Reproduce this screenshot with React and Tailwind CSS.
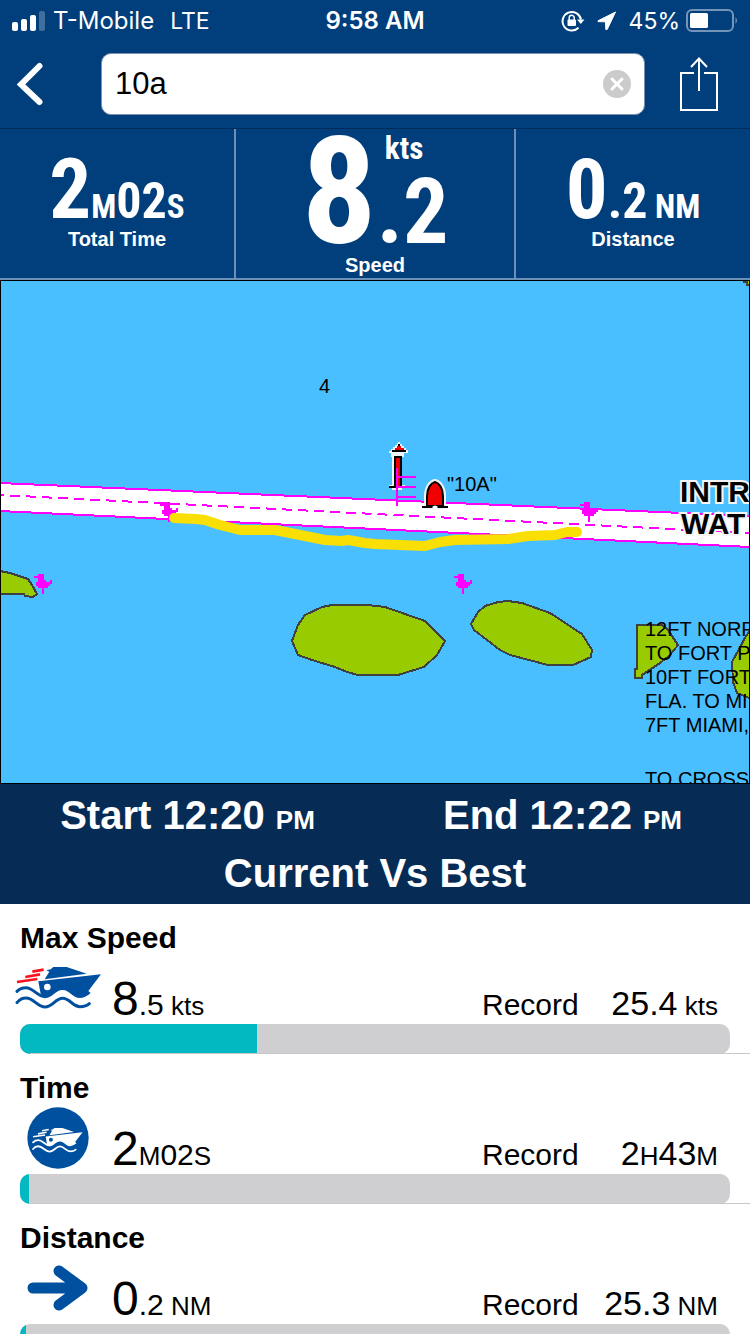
import { useState } from "react";

const records = [
  { title: "Max Speed", icon: "speed", value: [["8", "lg"], [".5", "md"], [" kts", "sm"]], best: [["25.4", "best"], [" kts", "sm"]], percent: 33.4 },
  { title: "Time", icon: "time", value: [["2", "lg"], ["M", "sm"], ["02", "md"], ["S", "sm"]], best: [["2", "best"], ["H", "sm"], ["43", "best"], ["M", "sm"]], percent: 1.3 },
  { title: "Distance", icon: "distance", value: [["0", "lg"], [".2", "md"], [" NM", "sm"]], best: [["25.3", "best"], [" NM", "sm"]], percent: 0.8 },
];

const sizes = {
  lg: "text-[48px]",
  md: "text-[30px]",
  best: "text-[34px]",
  sm: "text-[26px]",
};

const StatusBar = () => (
  <div className="grid h-10 grid-cols-[1fr_auto_1fr] items-center px-3 pt-0.5 font-['Inter',sans-serif] text-[24px] leading-none">
    <div className="flex items-center gap-2">
      <svg className="h-5 w-[33px]" viewBox="0 0 33 20" fill="white" aria-hidden="true">
        <rect x="0" y="11" width="6" height="9" rx="2" />
        <rect x="9" y="8" width="6" height="12" rx="2" />
        <rect x="18" y="4" width="6" height="16" rx="2" />
        <rect x="27" y="0" width="6" height="20" rx="2" opacity="0.25" />
      </svg>
      <span>T-Mobile</span>
      <span className="ml-2 text-[23px]">LTE</span>
    </div>
    <span className="font-semibold">9:58 AM</span>
    <div className="flex items-center justify-end">
      {/* Orientation lock */}
      <svg className="mr-3 h-[22px] w-6" viewBox="0 0 24 22" aria-hidden="true">
        <path d="M17.5 17.8A9.3 9.3 0 1 1 20 9.5" fill="none" stroke="white" strokeWidth="2" />
        <path d="M16 9.5h7.5l-3.7 4.4z" fill="white" />
        <rect x="6.5" y="9.5" width="8.5" height="6.5" rx="1" fill="white" />
        <path d="M8.2 10V7.8a2.5 2.5 0 0 1 5 0V10" fill="none" stroke="white" strokeWidth="1.5" />
      </svg>
      {/* Location */}
      <svg className="mr-3 h-5 w-5" viewBox="0 0 20 20" fill="white" stroke="white" strokeLinejoin="round" aria-hidden="true">
        <path d="M18.500 1 1 9.800V10.600L8.500 10.800 8.800 18.500H10.200z" />
      </svg>
      <span className="text-[23px]">45%</span>
      <svg className="ml-1.5 h-6 w-[52px]" viewBox="0 0 52 24" aria-hidden="true">
        <rect x="1" y="1" width="46" height="21" rx="5" fill="none" stroke="white" strokeOpacity="0.45" strokeWidth="2" />
        <rect x="4" y="4" width="18" height="15" rx="1.5" fill="white" />
        <path d="M49.500 8q3 3.500 0 7z" fill="white" opacity="0.45" />
      </svg>
    </div>
  </div>
);

const SearchHeader = () => {
  const [name, setName] = useState("10a");

  return (
    <header className="flex h-[88px] items-center pr-8 pl-4">
      <button type="button" aria-label="Back" className="mr-[58px]">
        <svg className="h-11 w-[27px]" viewBox="0 0 27 44" fill="none" stroke="white" strokeWidth="6" strokeLinecap="round">
          <path d="M23.500 4 5 22.500 23.500 40" />
        </svg>
      </button>
      <div className="flex h-[62px] min-w-0 flex-1 items-center rounded-[10px] border border-[#7d92aa] bg-white px-[13px]">
        <input
          type="text"
          aria-label="Trip name"
          value={name}
          onChange={(e) => setName(e.target.value)}
          className="min-w-0 flex-1 bg-transparent text-[31px] text-black outline-none"
        />
        <button type="button" aria-label="Clear" onClick={() => setName("")}>
          <svg className="h-7 w-7" viewBox="0 0 28 28">
            <circle cx="14" cy="14" r="14" fill="#cbcbcb" />
            <path d="M9 9l10 10M19 9 9 19" stroke="white" strokeWidth="3" strokeLinecap="round" />
          </svg>
        </button>
      </div>
      <button type="button" aria-label="Share" className="ml-[35px]">
        <svg className="h-[54px] w-[38px]" viewBox="0 0 38 54" fill="none" stroke="white" strokeWidth="2">
          <path d="M14 16H1v37h36V16H24M19 34V2M11 10l8-8.500 8 8.500" />
        </svg>
      </button>
    </header>
  );
};

const narrow = "font-['Roboto_Condensed','Open_Sans_Condensed','Noto_Sans_Condensed','Liberation_Sans',sans-serif] font-bold";

const SideStat = ({ parts, label }) => (
  <div className="flex flex-col items-center pt-[23px]">
    <p className={`flex items-baseline leading-none whitespace-pre ${narrow}`}>
      {parts.map(([text, size], i) => (
        <span key={i} className={size}>{text}</span>
      ))}
    </p>
    <p className="text-[20px] leading-[22px] font-bold">{label}</p>
  </div>
);

const Stats = () => (
  <section className="grid h-[152px] grid-cols-[236fr_280fr_234fr] divide-x-2 divide-[#6c90b6] border-t border-b-2 border-t-[#022b5a] border-b-[#6c90b6]">
    <SideStat
      label="Total Time"
      parts={[["2", "text-[83px] leading-[76px]"], ["M", "text-[33px]"], ["02", "text-[50px]"], ["S", "text-[33px]"]]}
    />
    <div className="flex flex-col items-center pt-[5px]">
      <div className={`flex items-end ${narrow}`}>
        <span className="text-[149px] leading-[106px]">8</span>
        <div className="flex flex-col">
          <span className="mb-4 ml-2 text-[31px] leading-[30px]">kts</span>
          <span className="text-[90px] leading-[65px]">.2</span>
        </div>
      </div>
      <p className="mt-2 text-[20px] leading-[24px] font-bold">Speed</p>
    </div>
    <SideStat
      label="Distance"
      parts={[["0", "text-[83px] leading-[76px]"], [".2", "text-[50px]"], [" NM", "text-[33px]"]]}
    />
  </section>
);

const notes = [
  ["12FT NORF", 636],
  ["TO FORT P", 660],
  ["10FT FORT", 684],
  ["FLA. TO MI", 708],
  ["7FT MIAMI,", 732],
  ["TO CROSS", 786],
];

// Small magenta marker, origin at its top left corner
const Marker = ({ x, y }) => (
  <path
    transform={`translate(${x} ${y})`}
    fill="#ff00ff"
    d="M4 0H10V6H12V8H16V6H18V10H16V12H14V14H10V20H8V14H4V12H2V8H4V4H0V2H4z"
  />
);

const ChartMap = () => (
  <svg className="block h-auto w-full" viewBox="0 280 750 504" role="img" aria-label="Trip track on chart">
    <rect x="0" y="280" width="750" height="504" fill="#4abfff" />
    <g shapeRendering="crispEdges">
      <path d="M0 483 750 516V547L0 511z" fill="white" />
      <path d="M0 483 750 516M0 511 750 547" stroke="#ff00ff" strokeWidth="2" />
      <path d="M0 495 750 533" stroke="#ff00ff" strokeWidth="2" strokeDasharray="10 6" strokeDashoffset="6" />
      <g fill="#99cc00" stroke="#404040" strokeWidth="2">
        <path d="M0 571 10 573 28 579 32 585 37 594 33 597 25 596 24 594 0 594z" />
        <path d="M292 641 298 625 305 615 322 607 332 605 368 605 385 607 425 621 445 641 437 655 424 667 398 675 358 675 347 672 335 667 312 660 298 655 295 648z" />
        <path d="M471 624 478 612 485 606 498 602 508 601 522 603 550 613 582 634 592 650 591 657 573 665 548 665 510 655 500 650 474 630z" />
        <path d="M637 625H662L668 630 678 645 670 655 660 663 642 675V678H635V669H637z" />
        <path d="M752 628 746 636 732 662 733 682 737 693 742 695 752 699z" />
        <path d="M740 280H744V282H747V285H752V279z" />
      </g>
      <Marker x="160" y="502" />
      <Marker x="580" y="502" />
      <Marker x="34" y="574" />
      <Marker x="454" y="574" />
    </g>
    <path
      d="M174 518 196 519 205 520 220 525 240 530 275 530 300 535 325 540 342 541 348 540 365 543 375 544 400 545 425 546 440 542 455 540 508 539 528 536 555 535 567 532 577 532"
      fill="none"
      stroke="#fadf05"
      strokeWidth="10"
      strokeLinecap="round"
      strokeLinejoin="round"
    />
    {/* Light tower */}
    <g shapeRendering="crispEdges">
      <path d="M398 442h2v2h2v2h2v2h2v2h2v3h-4v4h-2v28h3v2h-3v3h-10v-3h-3v-2h3v-28h-1v-4h-2v-2h2v-2h2v-2h2v-2h2z" fill="#f2f2f2" />
      <path d="M392 450h14v2h-14zM394 456h8v32h-8zM389 486h17v2h-17zM398 444h2v2h-2z" fill="black" />
      <path d="M397 446h4v2h3v2h-9v-2h2zM396 458h4v28h-4z" fill="#f00000" />
      <path d="M396 468h2v38h-2zM398 476h18v2h-18zM398 486h18v2h-18zM398 496h18v2h-18z" fill="#ff00ff" />
    </g>
    {/* Buoy */}
    <path d="M427 506V496C427 488 431 483 435 482C439 483 443 488 443 496V506z" fill="none" stroke="#f2f2f2" strokeWidth="6" />
    <path d="M427 506V496C427 488 431 483 435 482C439 483 443 488 443 496V506z" fill="#f00000" stroke="black" strokeWidth="2" />
    <path d="M422 507H448" stroke="black" strokeWidth="2" />
    <path d="M432 507q3-3 6 0q-3 4-6 0z" fill="white" />
    <g className="font-['Liberation_Sans',sans-serif]" fill="black" fontSize="20">
      <text x="319" y="393">4</text>
      <text x="447" y="491">"10A"</text>
      {notes.map(([line, y]) => (
        <text key={y} x="645" y={y}>{line}</text>
      ))}
      <g fontSize="30" fontWeight="700" stroke="#f5f5f5" strokeWidth="4" paintOrder="stroke">
        <text x="680" y="502">INTR</text>
        <text x="681" y="534">WAT</text>
      </g>
    </g>
    <rect x="0.500" y="280.500" width="749" height="503" fill="none" stroke="black" />
  </svg>
);

const Boat = ({ color, accent, hole }) => (
  <>
    <path d="M134 208 148 185 139 181 152 178 160 171H200L260 191z" fill={color} />
    <path d="M115 214 303 193 265 243 272 249Q255 264 240 264C218 264 208 240 188 240C166 240 158 264 135 264L122 252z" fill={color} />
    <circle cx="142" cy="231" r="10" fill={hole} />
    <path d="M97 185 131 179M76 201 120 193M51 216 112 207" fill="none" stroke={accent} strokeWidth="8" />
    <g fill="none" stroke={color} strokeWidth="9" strokeLinecap="round">
      <path d="M51 244Q62 233 78 233C100 233 112 260 135 260" />
      <path d="M51 278Q62 264 78 264C102 264 112 291 135 291C158 291 166 265 188 265C210 265 218 290 240 290Q258 290 268 281" />
    </g>
  </>
);

const RecordIcon = ({ type }) => {
  if (type === "speed") {
    return (
      <svg className="mt-3 -ml-[5px] h-[43px] w-[87px]" viewBox="45 171 261 129" aria-hidden="true">
        <Boat color="#0050a0" accent="#f8141e" hole="white" />
      </svg>
    );
  }
  if (type === "time") {
    return (
      <svg className="mt-0.5 ml-[7px] h-[62px] w-[62px]" viewBox="0 0 186 186" aria-hidden="true">
        <circle cx="93" cy="93" r="92" fill="#0050a0" />
        <g transform="translate(-12 -38) scale(0.590)">
          <Boat color="white" accent="white" hole="#0050a0" />
        </g>
      </svg>
    );
  }
  return (
    <svg className="mt-0.5 ml-[7px] h-[62px] w-[62px]" viewBox="0 0 62 62" fill="none" stroke="#0050a0" strokeWidth="11" strokeLinecap="round" strokeLinejoin="round" aria-hidden="true">
      <path d="M6 31H54M32 14 55 31 32 48" />
    </svg>
  );
};

const Figure = ({ parts }) => (
  <span className="flex items-baseline leading-none whitespace-pre">
    {parts.map(([text, size], i) => (
      <span key={i} className={sizes[size]}>{text}</span>
    ))}
  </span>
);

const RecordRow = ({ title, icon, value, best, percent }) => (
  <li className="relative h-[150px] px-5 pt-[17px]">
    <h3 className="text-[30px] leading-[34px] font-bold">{title}</h3>
    <div className="flex h-[69px] items-start">
      <div className="w-[92px] shrink-0">
        <RecordIcon type={icon} />
      </div>
      <div className="flex flex-1 items-baseline pt-5 pr-3">
        <Figure parts={value} />
        <span className="ml-auto w-[126px] text-[30px] leading-none">Record</span>
        <span className="flex w-[110px] justify-end">
          <Figure parts={best} />
        </span>
      </div>
    </div>
    <div className="h-[30px] overflow-hidden rounded-[10px] bg-[#cfcfd1]">
      <div className="h-full bg-[#02b9c1]" style={{ width: `${percent}%` }} />
    </div>
    <div className="absolute right-0 bottom-0 left-[30px] h-px bg-[#c8c7cc]" />
  </li>
);

export default function App() {
  return (
    <div className="h-screen overflow-hidden bg-white font-['Liberation_Sans',Arial,sans-serif] text-black">
      <div className="bg-[#003e7c] text-white">
        <StatusBar />
        <SearchHeader />
        <Stats />
      </div>
      <ChartMap />
      <section className="bg-[#062c56] py-0.5 text-center text-[40px] leading-[58px] font-bold text-white">
        <div className="grid grid-cols-2">
          <p>Start 12:20 <span className="text-[26px] leading-none">PM</span></p>
          <p>End 12:22 <span className="text-[26px] leading-none">PM</span></p>
        </div>
        <h2>Current Vs Best</h2>
      </section>
      <ul>
        {records.map((record) => (
          <RecordRow key={record.title} {...record} />
        ))}
      </ul>
    </div>
  );
}
